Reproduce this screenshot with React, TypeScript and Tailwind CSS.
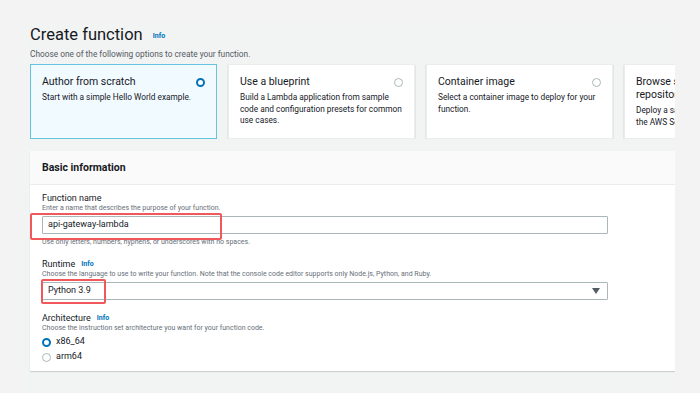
import React from 'react';

const font = { fontFamily: 'Roboto, "Liberation Sans", Arial, sans-serif' };

interface Option {
  title: string;
  desc: string;
  selected?: boolean;
}

const options: Option[] = [
  { title: 'Author from scratch', desc: 'Start with a simple Hello World example.', selected: true },
  { title: 'Use a blueprint', desc: 'Build a Lambda application from sample code and configuration presets for common use cases.' },
  { title: 'Container image', desc: 'Select a container image to deploy for your function.' },
  { title: 'Browse serverless app repository', desc: 'Deploy a sample Lambda application from the AWS Serverless Application Repository.' },
];

function Radio({ checked }: { checked?: boolean }) {
  return checked ? (
    <span className="block h-[9px] w-[9px] shrink-0 rounded-full border-[2.5px] border-[#0073bb] bg-white" />
  ) : (
    <span className="block h-[9px] w-[9px] shrink-0 rounded-full border border-[#aab7b8] bg-white" />
  );
}

function Info() {
  return <span className="ml-[6px] text-[7px] font-bold text-[#0073bb]">Info</span>;
}

export default function App() {
  return (
    <div className="h-[393px] w-[700px] overflow-hidden bg-[#f3f3f3] text-[#16191f]" style={font}>
      <div className="ml-[22px] mt-[22px] h-[371px] w-[653px] overflow-hidden bg-[#f2f3f3] pl-[8px]">
        <div className="flex h-[24px] items-end">
          <h1 className="text-[16.5px] leading-[22px] font-normal">Create function</h1>
          <span className="mb-[5px] ml-[10px] text-[7px] font-bold text-[#0073bb]">Info</span>
        </div>
        <p className="mt-[3px] text-[8.3px] leading-[10px] text-[#545b64]">
          Choose one of the following options to create your function.
        </p>

        <div className="mt-[5px] flex w-[645px] gap-[11px] overflow-hidden">
          {options.map((o) => (
            <div
              key={o.title}
              className={
                o.selected
                  ? 'h-[75px] w-[187px] shrink-0 border border-[#66c3dd] bg-[#f1faff] pl-[11px] pr-[5px] pt-[10px]'
                  : 'h-[75px] w-[187px] shrink-0 border border-[#eaeded] bg-white pl-[11px] pr-[5px] pt-[10px] shadow-[0_1px_1px_rgba(0,28,36,0.3)]'
              }
            >
              <div className="flex items-start justify-between pr-[6px] leading-none">
                <span className="pr-[6px] text-[10.5px] leading-[13px]">{o.title}</span>
                <span className="mt-[3px] flex">
                  <Radio checked={o.selected} />
                </span>
              </div>
              <p className="mt-[4px] text-[8.3px] leading-[11.5px] text-[#16191f]">{o.desc}</p>
            </div>
          ))}
        </div>

        <div className="relative mt-[12px] w-[645px] bg-white shadow-[0_1px_1px_rgba(0,28,36,0.15)]">
          <div className="flex h-[34px] items-center border-b border-[#eaeded] bg-[#fafafa] px-[12px]">
            <h2 className="text-[10.5px] font-bold">Basic information</h2>
          </div>

          <div className="px-[12px] pt-[8px] pb-[7px]">
            <div className="text-[9px] leading-[10px]">Function name</div>
            <div className="text-[7px] leading-[10px] text-[#687078]">
              Enter a name that describes the purpose of your function.
            </div>
            <div className="relative mt-[3px] flex h-[18px] w-[566px] items-center rounded-[1px] border border-[#aab7b8] bg-white px-[5px]">
              <span className="text-[9px]">api-gateway-lambda</span>
              <div className="absolute left-[-13px] top-[-4px] h-[27px] w-[192px] rounded-[2px] border-2 border-[#f0585c]" />
            </div>
            <div className="mt-[3px] text-[7px] leading-[10px] text-[#687078]">
              Use only letters, numbers, hyphens, or underscores with no spaces.
            </div>

            <div className="mt-[12px] flex items-center text-[9px] leading-[10px]">
              Runtime
              <Info />
            </div>
            <div className="text-[7px] leading-[10px] text-[#687078]">
              Choose the language to use to write your function. Note that the console code editor supports only Node.js, Python, and Ruby.
            </div>
            <div className="relative mt-[3px] flex h-[18px] w-[566px] items-center justify-between rounded-[1px] border border-[#aab7b8] bg-white pl-[5px] pr-[7px]">
              <span className="text-[9px]">Python 3.9</span>
              <svg width="8" height="6" viewBox="0 0 8 6">
                <path d="M0 0h8L4 6z" fill="#545b64" />
              </svg>
              <div className="absolute left-[-2px] top-[-4px] h-[25px] w-[65px] rounded-[2px] border-2 border-[#f0585c]" />
            </div>

            <div className="mt-[13px] flex items-center text-[9px] leading-[10px]">
              Architecture
              <Info />
            </div>
            <div className="text-[7px] leading-[10px] text-[#687078]">
              Choose the instruction set architecture you want for your function code.
            </div>
            <label className="mt-[2px] flex h-[14px] items-center gap-[5px] text-[9px]">
              <Radio checked />
              x86_64
            </label>
            <label className="mt-[1px] flex h-[14px] items-center gap-[5px] text-[9px]">
              <Radio />
              arm64
            </label>
          </div>
        </div>
      </div>
    </div>
  );
}
